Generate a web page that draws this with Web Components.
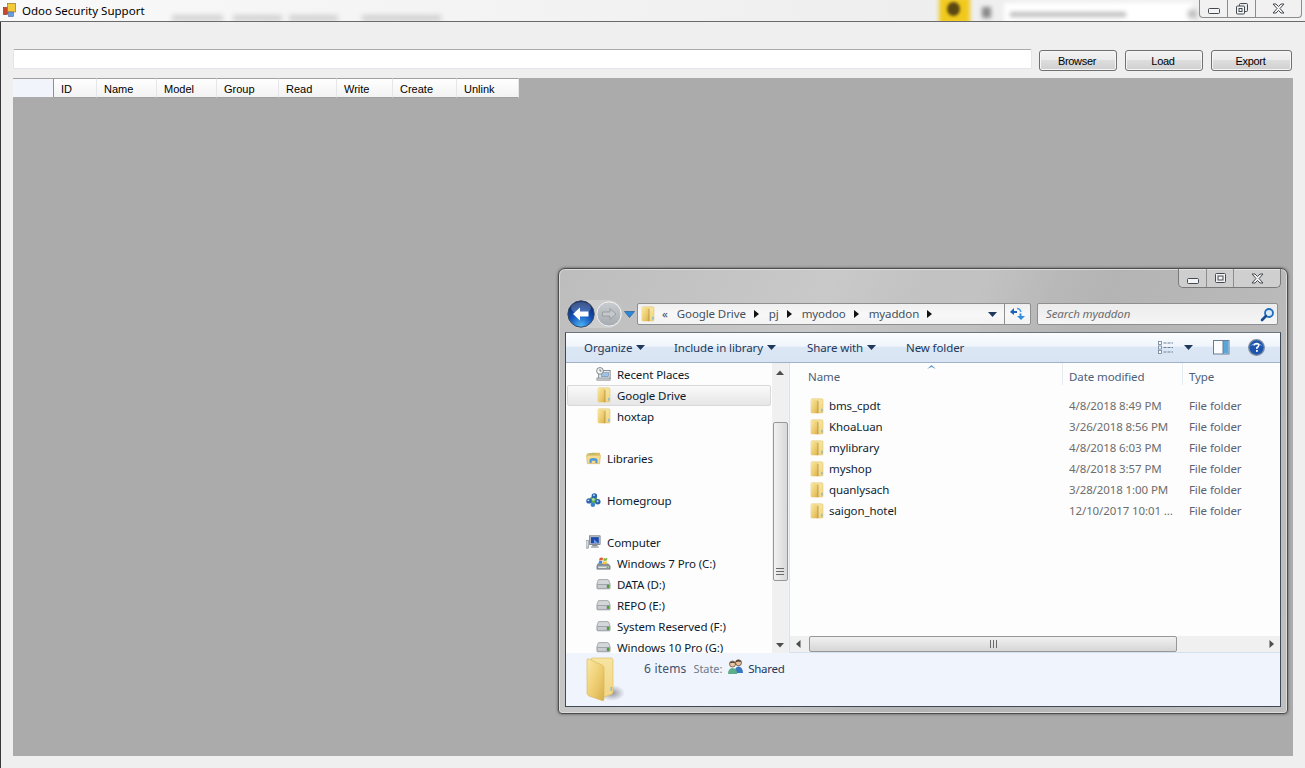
<!DOCTYPE html>
<html lang="en">
<head>
<meta charset="utf-8">
<title>Odoo Security Support</title>
<style>
  html, body { margin: 0; height: 768px; overflow: hidden; background: #f0f0f0; }
</style>
</head>
<body>
<odoo-app></odoo-app>

<script>
// Icons live in a map, each <ui-icon> copies its svg in its own shadow root
const FOLDER_DEFS = `
  <linearGradient id="a" x1="0" y1="0" x2="1" y2="1"><stop offset="0" stop-color="#fbe9a2"/><stop offset=".6" stop-color="#ecca6c"/><stop offset="1" stop-color="#d7ae4c"/></linearGradient>
  <linearGradient id="b" x1="0" y1="0" x2="0" y2="1"><stop offset="0" stop-color="#f6e4a0"/><stop offset="1" stop-color="#f1d683"/></linearGradient>`;

const ICONS = {
    app: `<svg width="16" height="16" viewBox="0 0 16 16"><rect x=".5" y="5.500" width="4" height="7" fill="#c8452a" stroke="#7a2a1a" stroke-width=".6"/><rect x="4.500" y="1.500" width="8" height="8.500" fill="#f3cb3a" stroke="#97752a" stroke-width=".7"/><rect x="5.500" y="10" width="5" height="4.500" fill="#6d9be0" stroke="#476aa0" stroke-width=".6"/></svg>`,
    folder: `<svg width="14" height="16" viewBox="0 0 14 16"><defs>${FOLDER_DEFS}</defs><path d="M1 2 Q1 .8 2.200 .8 H11.800 Q13 .8 13 2 V14 Q13 15 12 15 H2 Q1 15 1 14 Z" fill="url(#b)" stroke="#e0bd62" stroke-width=".5"/><path d="M1 2 Q1 1 2 1.200 L7.300 2.300 Q8 2.500 8 3.200 V15.200 L2 14.800 Q1 14.700 1 13.700 Z" fill="url(#a)"/><path d="M8 2.800V15" stroke="#a98a3e" stroke-width=".7"/><rect x="11.300" y="10.800" width="1.200" height="2.800" fill="#6fb4e8"/></svg>`,
    bigfolder: `<svg width="40" height="46" viewBox="0 0 40 46"><defs>${FOLDER_DEFS}<radialGradient id="s"><stop offset="0" stop-color="#7d7f86" stop-opacity=".85"/><stop offset="1" stop-color="#8d8f96" stop-opacity="0"/></radialGradient></defs><ellipse cx="26" cy="36" rx="13" ry="8" fill="url(#s)"/><path d="M5 2 Q5 1 6 1 H25 Q27 1 27 3 V35 Q27 37 25 37.500 L12 42 Z" fill="url(#b)" stroke="#dcbb62" stroke-width=".6"/><path d="M1 3 Q1 1 3 2 L16 8 Q18 9 18 11 V42 Q18 44.500 16 43.500 L3 39 Q1 38 1 36 Z" fill="url(#a)" stroke="#d8b357" stroke-width=".6"/><rect x="24.500" y="30" width="1.400" height="4" fill="#7fbbe8"/></svg>`,
    recent: `<svg width="17" height="16" viewBox="0 0 17 16"><rect x="3" y="4" width="13" height="9" fill="#e8ebee" stroke="#7b8289"/><rect x="6" y="6.500" width="8" height="4.500" fill="#9ec1e6" stroke="#5f7fa3" stroke-width=".6"/><rect x="1" y="12.500" width="15" height="2.500" fill="#c8ccd0" stroke="#7b8289" stroke-width=".7"/><circle cx="4.500" cy="4.500" r="3.800" fill="#f5f6f7" stroke="#6f767d"/><path d="M4.500 2.500V4.700H6.200" fill="none" stroke="#444" stroke-width=".8"/></svg>`,
    libraries: `<svg width="17" height="16" viewBox="0 0 17 16"><path d="M1 3 H6 L7 2 H15 Q16 2 16 3 V5 H1 Z" fill="#e2bd5e"/><rect x="3" y="2.600" width="8" height="1.400" fill="#9ac26b"/><path d="M.6 5 H16.400 L15.400 14.400 H1.600 Z" fill="#f5dc8f" stroke="#c9a44e" stroke-width=".6"/><path d="M4 13.800 V10.200 Q4 8 8.500 8 Q13 8 13 10.200 V13.800 H10.600 V11 H6.400 V13.800 Z" fill="#4e97d8"/></svg>`,
    homegroup: `<svg width="17" height="16" viewBox="0 0 17 16"><circle cx="8.500" cy="8" r="4.200" fill="#5cae4c"/><circle cx="9.500" cy="3.400" r="3.100" fill="#2a62b0"/><circle cx="3.400" cy="9" r="3.100" fill="#2a62b0"/><circle cx="13.400" cy="10" r="3.100" fill="#2a62b0"/><circle cx="7.800" cy="13.300" r="2.600" fill="#3c82cf"/><circle cx="9" cy="2.600" r="1.100" fill="#bcd8f5"/><circle cx="2.700" cy="8.400" r="1.100" fill="#bcd8f5"/><circle cx="13.100" cy="9.400" r="1.100" fill="#bcd8f5"/><circle cx="8.400" cy="7.400" r="1.600" fill="#b5e0a3"/></svg>`,
    computer: `<svg width="17" height="16" viewBox="0 0 17 16"><rect x="0" y="6" width="3" height="9" fill="#d7dade" stroke="#7d848b" stroke-width=".6"/><rect x="1" y="13" width="1" height="1" fill="#60c040"/><rect x="4" y="1" width="12" height="10" fill="#bcc3ca" stroke="#5a6068" stroke-width=".7"/><rect x="5.500" y="2.500" width="9" height="7" fill="#1d48ac"/><path d="M9 9.500 V5 L14 9.500 Z" fill="#6f97e0"/><rect x="7" y="11.500" width="6" height="1.600" fill="#7d848b"/><rect x="5.500" y="13" width="9" height="1.600" fill="#a7adb3"/></svg>`,
    windrive: `<svg width="17" height="16" viewBox="0 0 17 16"><path d="M2 9 H14 L16 11.500 V15 H1 V11.500 Z" fill="#8c949b" stroke="#5d646b" stroke-width=".6"/><rect x="2.500" y="12" width="12" height="1.800" fill="#dfe3e6"/><rect x="12" y="12.200" width="2" height="1.300" fill="#5da83e"/><path d="M4 2.500 Q6 1 8 2.200 L7.400 5.200 Q5.500 4.200 3.500 5.500 Z" fill="#e8582c"/><path d="M8.800 2.400 Q10.600 3.400 13 2 L12.400 5 Q10.200 6.200 8.200 5.300 Z" fill="#7fba3c"/><path d="M3.300 6.200 Q5.300 5 7.200 6 L6.600 9 Q4.800 8 2.800 9.200 Z" fill="#3f86d6"/><path d="M8 6.100 Q10 7 12.300 5.800 L11.800 8.800 Q9.600 10 7.400 9 Z" fill="#f4c32c"/></svg>`,
    drive: `<svg width="17" height="12" viewBox="0 0 17 12"><path d="M3 1 H13 Q14.500 1 15 3 L16 6 V10.500 Q16 11.500 15 11.500 H2 Q1 11.500 1 10.500 V6 L2 3 Q2.400 1 3 1 Z" fill="#d4d7d9" stroke="#7f858a" stroke-width=".7"/><rect x="1.400" y="6" width="14.200" height="5.200" fill="#9aa1a6"/><rect x="2" y="7" width="10" height="3.400" fill="#c9cdd0"/><rect x="12.500" y="7" width="2.400" height="3.400" fill="#4e9a32"/></svg>`,
    shared: `<svg width="17" height="16" viewBox="0 0 17 16"><circle cx="11.500" cy="3.800" r="3" fill="#e6bf9a" stroke="#4c3a2c" stroke-width=".7"/><path d="M8.400 3 Q11 -.8 14.600 3 Q11.500 2 8.400 3Z" fill="#3e3128"/><path d="M7.500 14 Q7.500 8 11.500 7.500 Q15.800 8 16 14 Z" fill="#3b78c4"/><circle cx="5.500" cy="5" r="3" fill="#ecc7a4" stroke="#4c3a2c" stroke-width=".7"/><path d="M2.400 4.400 Q5.400 .6 8.600 4.400 Q5.500 3.200 2.400 4.400Z" fill="#3e3128"/><path d="M1 15 Q1 9.400 5.500 9 Q10 9.400 10.200 15 Z" fill="#5cae8a"/></svg>`,
    back: `<svg width="28" height="28" viewBox="0 0 28 28"><defs><radialGradient id="g" cx=".5" cy=".95" r=".85"><stop offset="0" stop-color="#49b4f4"/><stop offset=".55" stop-color="#1552b8"/><stop offset="1" stop-color="#0a2a70"/></radialGradient></defs><circle cx="14" cy="14" r="13.200" fill="url(#g)" stroke="#3c4a5e"/><ellipse cx="14" cy="8" rx="10" ry="6" fill="#fff" opacity=".22"/><path d="M6 14 L13 7.500 V11.500 H21.500 V16.500 H13 V20.500 Z" fill="#fff"/></svg>`,
    forward: `<svg width="26" height="26" viewBox="0 0 26 26"><defs><linearGradient id="g" x1="0" y1="0" x2="0" y2="1"><stop offset="0" stop-color="#c9cdd1"/><stop offset="1" stop-color="#a6abb1"/></linearGradient></defs><circle cx="13" cy="13" r="12.200" fill="url(#g)" stroke="#f2f3f4"/><path d="M20 13 L14 7.600 V11 H6.500 V15 H14 V18.400 Z" fill="#c5c8cc" stroke="#8f9499" stroke-width=".8"/></svg>`,
    refresh: `<svg width="17" height="14" viewBox="0 0 17 14"><path d="M5 1 L1 5 L5 8 V6 H8 V4 H5 Z" fill="#1c60b8"/><path d="M12 13 L8 9 H10.500 V6.500 H12.500 V9 H16 Z" fill="#2f8fdd"/><path d="M8 1.500 Q11 1.500 12 5" fill="none" stroke="#4b9be0" stroke-width="1.400"/></svg>`,
    search: `<svg width="15" height="15" viewBox="0 0 15 15"><circle cx="9" cy="6" r="4" fill="#dceaf8" stroke="#1f6fc0" stroke-width="1.800"/><path d="M6 9 L2 13" stroke="#134e92" stroke-width="2.600" stroke-linecap="round"/></svg>`,
    views: `<svg width="16" height="14" viewBox="0 0 16 14"><g fill="#fff" stroke="#6a7f9b" stroke-width=".8"><rect x=".5" y=".5" width="3" height="3"/><rect x=".5" y="5" width="3" height="3"/><rect x=".5" y="9.500" width="3" height="3"/></g><path d="M5.500 2H15M5.500 6.500H15M5.500 11H15" stroke="#6a7f9b" stroke-dasharray="3 1"/></svg>`,
    pane: `<svg width="17" height="15" viewBox="0 0 17 15"><rect x=".5" y=".5" width="15.500" height="13.500" fill="#fbfcfd" stroke="#6a7c93"/><rect x="10" y="1" width="5.500" height="12.500" fill="#5aa6da"/><path d="M10 .5V14" stroke="#6a7c93"/></svg>`,
    help: `<svg width="17" height="17" viewBox="0 0 17 17"><circle cx="8.500" cy="8.500" r="7.800" fill="#1d55ae" stroke="#7f8ea3" stroke-width="1.300"/><path d="M2 7 Q8.500 1 15 7 Q8.500 4.500 2 7Z" fill="#8db4e8"/><path d="M6.200 6.500 Q6.500 4.500 8.700 4.500 Q11 4.700 10.800 6.500 Q10.500 7.800 8.900 8.500 V10" fill="none" stroke="#fff" stroke-width="1.500"/><rect x="8" y="11" width="1.800" height="1.800" fill="#fff"/></svg>`,
    min: `<svg width="12" height="6" viewBox="0 0 12 6"><rect x=".5" y=".5" width="11" height="5" rx="1" fill="#f3f4f5" stroke="#454a50"/></svg>`,
    restore: `<svg width="12" height="12" viewBox="0 0 12 12"><rect x="3.500" y=".5" width="8" height="8" rx="1" fill="#e9eaeb" stroke="#454a50"/><rect x=".5" y="3" width="8" height="8" rx="1" fill="#f3f4f5" stroke="#454a50"/><rect x="3" y="5.500" width="3" height="3" fill="none" stroke="#454a50"/></svg>`,
    max: `<svg width="11" height="10" viewBox="0 0 11 10"><rect x=".5" y=".5" width="10" height="9" rx="1" fill="#f3f4f5" stroke="#454a50"/><rect x="3" y="3" width="5" height="4" fill="none" stroke="#454a50"/></svg>`,
    close: `<svg width="13" height="11" viewBox="0 0 13 11"><path d="M1 1H4L6.500 3.500L9 1H12L8 5.500L12 10H9L6.500 7.500L4 10H1L5 5.500Z" fill="#f3f4f5" stroke="#454a50" stroke-linejoin="round"/></svg>`,
    left: `<svg width="5" height="8" viewBox="0 0 5 8"><path d="M4.500 0V8L0 4Z" fill="#4d4d4d"/></svg>`,
    right: `<svg width="5" height="8" viewBox="0 0 5 8"><path d="M.5 0V8L5 4Z" fill="#4d4d4d"/></svg>`,
    up: `<svg width="8" height="5" viewBox="0 0 8 5"><path d="M0 5H8L4 .5Z" fill="#4d4d4d"/></svg>`,
    down: `<svg width="8" height="5" viewBox="0 0 8 5"><path d="M0 0H8L4 4.500Z" fill="#4d4d4d"/></svg>`,
    caret: `<svg width="9" height="5" viewBox="0 0 9 5"><path d="M0 0H9L4.500 5Z" fill="#1e395b"/></svg>`,
    bluecaret: `<svg width="11" height="7" viewBox="0 0 11 7"><path d="M.5 .5H10.500L5.500 6.500Z" fill="#2a86d8" stroke="#2b5f96" stroke-width=".7"/></svg>`,
    crumb: `<svg width="5" height="8" viewBox="0 0 5 8"><path d="M0 0V8L5 4Z" fill="#111"/></svg>`,
    grip: `<svg width="8" height="7" viewBox="0 0 8 7"><path d="M0 .5H8M0 3.500H8M0 6.500H8" stroke="#6a6a6a"/></svg>`,
    gripv: `<svg width="7" height="8" viewBox="0 0 7 8"><path d="M.5 0V8M3.500 0V8M6.500 0V8" stroke="#6a6a6a"/></svg>`,
    sort: `<svg width="9" height="4" viewBox="0 0 9 4"><path d="M0 4 L4.500 0 L9 4 L4.500 2Z" fill="#6b9bc8"/></svg>`
};

class UiIcon extends HTMLElement {
    connectedCallback() {
        this.attachShadow({ mode: 'open' });
        this.shadowRoot.innerHTML = `<style>:host{display:inline-flex;flex:none;line-height:0}</style>${ICONS[this.getAttribute('name')] || ''}`;
    }
}
customElements.define('ui-icon', UiIcon);

// Classic WinForms button
class WinButton extends HTMLElement {
    connectedCallback() {
        this.attachShadow({ mode: 'open' });
        this.shadowRoot.innerHTML = `
            <style>
                :host {
                    display: flex; align-items: center; justify-content: center;
                    box-sizing: border-box; height: 21px; width: var(--w, 78px);
                    border: 1px solid #707070; border-radius: 3px;
                    box-shadow: inset 0 0 0 1px #f6f6f6;
                    background: linear-gradient(#f2f2f2 0, #ebebeb 48%, #dddddd 50%, #cfcfcf 100%);
                    font: 11px "Liberation Sans", sans-serif; letter-spacing: -.3px; color: #000; padding: 1px 2px 0 0;
                }
            </style>
            <slot></slot>`;
    }
}
customElements.define('win-button', WinButton);

// Top title bar of the WinForms app, behind it the blurred aero glass
class AppTitlebar extends HTMLElement {
    connectedCallback() {
        this.attachShadow({ mode: 'open' });
        this.shadowRoot.innerHTML = `
            <style>
                :host {
                    display: flex; align-items: center; position: relative; overflow: hidden;
                    box-sizing: border-box; height: 22px; padding: 0 0 1px 3px; gap: 3px;
                    background: linear-gradient(90deg, #f9f9f9, #f3f3f3 40%, #eeeeee 70%, #f3f3f3);
                    border-bottom: 1px solid #6a6a6a;
                    font: 11.5px "Noto Sans", sans-serif; color: #000;
                }
                .title { position: relative; }
                .blur { position: absolute; filter: blur(2.500px); }
                .word { top: 15px; height: 6px; background: #7f7f7f; opacity: .3; }
                .sun { left: 939px; top: -3px; width: 31px; height: 27px; background: #f1c91c; filter: blur(2px); }
                .spot { left: 947px; top: 2px; width: 13px; height: 14px; border-radius: 50%; background: #5a4712; filter: blur(1.500px); }
                .mark { left: 982px; top: 7px; width: 9px; height: 11px; background: #5f5f5f; opacity: .7; filter: blur(2px); }
                .box { left: 1004px; top: 3px; width: 188px; height: 20px; background: #fff; filter: blur(2px); }
                .boxtext { left: 1010px; top: 12px; width: 116px; height: 5px; background: #a8a8a8; opacity: .75; filter: blur(2px); }
                .mark2 { left: 1188px; top: 10px; width: 9px; height: 8px; background: #bdbdbd; }
                .caps {
                    position: absolute; left: 1199px; top: 0; display: flex; box-sizing: border-box;
                    width: 103px; height: 18px; border: 1px solid #8c8c8c; border-top: 0;
                    border-radius: 0 0 4px 4px; background: rgba(240,240,240,.65);
                }
                .caps span { display: flex; align-items: center; justify-content: center; border-right: 1px solid #8c8c8c; }
                .caps span:nth-child(1) { width: 28px; padding-top: 4px; box-sizing: border-box; }
                .caps span:nth-child(2) { width: 27px; }
                .caps span:nth-child(3) { flex: 1; border: 0; }
            </style>
            <ui-icon name="app"></ui-icon>
            <div class="blur word" style="left:172px;width:51px"></div>
            <div class="blur word" style="left:233px;width:49px"></div>
            <div class="blur word" style="left:289px;width:49px"></div>
            <div class="blur word" style="left:362px;width:79px"></div>
            <div class="blur sun"></div><div class="blur spot"></div>
            <div class="blur mark"></div>
            <div class="blur box"></div>
            <div class="blur boxtext"></div>
            <div class="blur mark2"></div>
            <span class="title"><slot></slot></span>
            <div class="caps">
                <span><ui-icon name="min"></ui-icon></span>
                <span><ui-icon name="restore"></ui-icon></span>
                <span><ui-icon name="close"></ui-icon></span>
            </div>`;
    }
}
customElements.define('app-titlebar', AppTitlebar);

// Path field plus the three buttons
class PathBar extends HTMLElement {
    connectedCallback() {
        this.attachShadow({ mode: 'open' });
        this.shadowRoot.innerHTML = `
            <style>
                :host { display: flex; align-items: flex-start; gap: 8px; padding: 0 13px 0 13px; height: 29px; box-sizing: border-box; }
                .field {
                    box-sizing: border-box; width: 1019px; height: 20px; margin-right: -1px; background: #fff;
                    border: 1px solid #e2e6ec; border-top-color: #ababab; border-radius: 2px;
                }
                slot { display: flex; gap: 8px; padding-top: 1px; }
            </style>
            <div class="field"></div>
            <slot></slot>`;
    }
}
customElements.define('path-bar', PathBar);

class GridHead extends HTMLElement {
    connectedCallback() {
        const cols = JSON.parse(this.getAttribute('cols'));
        this.attachShadow({ mode: 'open' });
        this.shadowRoot.innerHTML = `
            <style>
                :host { display: flex; width: 506px; height: 20px; font: 11px "Liberation Sans", sans-serif; color: #000; }
                .corner { box-sizing: border-box; width: 41px; height: 19px; background: #f1f4fa; border-top: 1px solid #a0a0a0; border-right: 1px solid #8f8f8f; }
                .cell {
                    box-sizing: border-box; display: flex; align-items: center; padding: 2px 0 0 7px;
                    background: linear-gradient(#ffffff, #f8f8f8 55%, #f2f2f2);
                    border-top: 1px solid #a0a0a0; border-bottom: 1px solid #a0a0a0; border-right: 1px solid #e4e6ea;
                }
            </style>
            <div class="corner"></div>
            ${cols.map(([name, w]) => `<div class="cell" style="width:${w}px">${name}</div>`).join('')}`;
    }
}
customElements.define('grid-head', GridHead);

// Left tree row
class NavItem extends HTMLElement {
    connectedCallback() {
        const top = this.hasAttribute('top');
        this.attachShadow({ mode: 'open' });
        this.shadowRoot.innerHTML = `
            <style>
                :host {
                    display: flex; align-items: center; box-sizing: border-box; height: 21px; gap: 6px;
                    margin: 0 0 0 1px; width: 204px; border: 1px solid transparent; border-radius: 2px;
                    padding-left: ${top ? 18 : 28}px; color: #0c1a2c;
                }
                :host([selected]) { border-color: #d9d9d9; background: linear-gradient(#fafafa, #e6e6e6); }
                ui-icon { width: 15px; justify-content: center; margin-top: -1px; overflow: visible; }
                :host([gap]) { margin-top: 21px; }
            </style>
            <ui-icon name="${this.getAttribute('icon')}"></ui-icon>
            <slot></slot>`;
    }
}
customElements.define('nav-item', NavItem);

class FileRow extends HTMLElement {
    connectedCallback() {
        this.attachShadow({ mode: 'open' });
        this.shadowRoot.innerHTML = `
            <style>
                :host { display: flex; align-items: center; height: 21px; color: #6d6d6d; }
                .name { display: flex; align-items: center; gap: 5px; box-sizing: border-box; width: 279px; padding-left: 20px; color: #111d2e; }
                .date { box-sizing: border-box; width: 120px; }
                .type { color: #5e6170; }
            </style>
            <div class="name"><ui-icon name="folder"></ui-icon>${this.getAttribute('name')}</div>
            <div class="date">${this.getAttribute('date')}</div>
            <div class="type">File folder</div>`;
    }
}
customElements.define('file-row', FileRow);

// Windows 7 Explorer window floating over the grey grid
class ExplorerWindow extends HTMLElement {
    connectedCallback() {
        this.attachShadow({ mode: 'open' });
        const crumb = '<ui-icon name="crumb"></ui-icon>';
        this.shadowRoot.innerHTML = `
            <style>
                :host {
                    position: absolute; left: 558px; top: 268px; z-index: 2;
                    box-sizing: border-box; width: 730px; height: 446px; display: flex; flex-direction: column;
                    padding: 0 6px 6px 6px; border-radius: 7px 7px 4px 4px; border: 1px solid #4d4d4d;
                    box-shadow: 0 0 3px rgba(0,0,0,.55), inset 0 0 0 1px #dcdcdc;
                    background:
                        linear-gradient(115deg, rgba(255,255,255,0) 40%, rgba(255,255,255,.07) 46%, rgba(255,255,255,0) 54%),
                        linear-gradient(115deg, #bdbdbd, #c9c9c9 30%, #b4b4b4 60%, #c0c0c0);
                    font: 11.5px "Noto Sans", sans-serif; letter-spacing: -.1px;
                }
                .caps { display: flex; justify-content: flex-end; height: 19px; flex: none; }
                .caps div { display: flex; box-sizing: border-box; width: 103px; border: 1px solid #7a7a7a; border-top: 0; border-radius: 0 0 5px 5px; background: rgba(235,235,235,.45); }
                .caps span { display: flex; align-items: center; justify-content: center; border-right: 1px solid #8e8e8e; }
                .caps span:nth-child(1) { width: 28px; padding-top: 5px; box-sizing: border-box; }
                .caps span:nth-child(2) { width: 26px; }
                .caps span:nth-child(3) { flex: 1; border: 0; }

                .toolbar { display: flex; height: 30px; flex: none; margin: 11px 0 0 2px; align-items: center; }
                .nav { display: flex; align-items: center; width: 70px; flex: none; }
                .pill { display: flex; align-items: center; gap: 1px; border-radius: 14px; background: rgba(255,255,255,.22); }
                .nav > ui-icon { margin-left: 2px; }
                .addr {
                    box-sizing: border-box; height: 22px; width: 394px; display: flex; align-items: center;
                    border: 1px solid #8e8f8f; border-radius: 2px; background: linear-gradient(#efefef, #f8f8f8 50%, #f3f3f3);
                    color: #44505d; padding-left: 3px; flex: none;
                }
                .addr .crumbs { display: flex; align-items: center; flex: 1; }
                .addr .t { margin: 0 8px 2px 0; }
                .addr ui-icon[name=crumb] { margin-right: 10px; }
                .addr .drop { width: 24px; display: flex; justify-content: center; }
                .addr .ref { display: flex; align-items: center; justify-content: center; width: 25px; height: 20px; border-left: 1px solid #8e8f8f; }
                .search {
                    box-sizing: border-box; height: 22px; width: 241px; margin-left: 6px; display: flex; align-items: center; justify-content: space-between;
                    border: 1px solid #8e8f8f; border-radius: 2px; background: linear-gradient(#ececec, #f5f5f5);
                    color: #6d6d6d; font-style: italic; padding: 0 2px 0 8px;
                }
                .search span { margin-bottom: 2px; }

                .client {
                    flex: 1; min-height: 0; margin-top: 3px; border: 1px solid #3f4a56; border-top-color: #6b7480; display: flex; flex-direction: column;
                    background: #fdfdfd;
                }
                .cmd {
                    flex: none; display: flex; align-items: center; height: 30px; box-sizing: border-box; padding-left: 18px;
                    background: linear-gradient(#fbfdff 0, #eff5fb 45%, #dce7f5 50%, #d8e4f3 100%);
                    border-bottom: 1px solid #a0b2c8; color: #1e395b;
                }
                .cmd .i { display: flex; align-items: center; gap: 4px; }
                .cmd .i:nth-child(1) { width: 90px; }
                .cmd .i:nth-child(2) { width: 133px; }
                .cmd .i:nth-child(3) { width: 99px; }
                .cmd .tools { margin-left: auto; display: flex; align-items: center; padding-right: 15px; }

                .mid { flex: 1; min-height: 0; display: flex; }
                .tree { box-sizing: border-box; width: 206px; height: 100%; overflow: hidden; flex: none; padding-top: 1px; }
                .vbar {
                    box-sizing: border-box; width: 16px; flex: none; background: #f0f0f0; display: flex; flex-direction: column; align-items: center;
                    padding-top: 7px;
                }
                .vthumb {
                    box-sizing: border-box; width: 15px; height: 159px; margin-top: 47px; display: flex; align-items: center; justify-content: center;
                    border: 1px solid #979797; border-radius: 2px; background: linear-gradient(90deg, #f1f1f1, #d8d8d8);
                }
                .vbar ui-icon:last-child { margin-top: auto; margin-bottom: 5px; }
                .split { width: 2px; flex: none; background: #eef3f9; border-right: 1px solid #d6e2ef; box-sizing: border-box; }

                .list { flex: 1; min-width: 0; display: flex; flex-direction: column; position: relative; }
                .head { display: flex; height: 32px; flex: none; color: #4c607a; align-items: flex-start; }
                .head div { box-sizing: border-box; height: 22px; padding-top: 6px; line-height: 16px; }
                .head div:nth-child(1) { width: 273px; padding-left: 18px; border-right: 1px solid #e6ecf2; }
                .head div:nth-child(2) { width: 120px; padding-left: 6px; border-right: 1px solid #e6ecf2; }
                .head div:nth-child(3) { padding-left: 6px; }
                .sort { position: absolute; left: 137px; top: 2px; }
                .rows { flex: 1; }
                .hbar {
                    flex: none; height: 17px; box-sizing: border-box; display: flex; align-items: center; background: #f0f0f0;
                    border-bottom: 1px solid #d5e0ee;
                }
                .hbar > ui-icon:first-child { margin-left: 6px; }
                .hthumb {
                    box-sizing: border-box; width: 368px; height: 16px; margin-left: 8px; display: flex; align-items: center; justify-content: center;
                    border: 1px solid #979797; border-radius: 2px; background: linear-gradient(#f1f1f1, #d6d6d6);
                }
                .hbar > ui-icon:last-child { margin-left: auto; margin-right: 6px; }

                .status {
                    flex: none; height: 53px; box-sizing: border-box; background: #f0f4fc; display: flex;
                    padding: 6px 0 0 20px; color: #1e395b;
                }
                .status .big { margin-top: -2px; }
                .status .txt { display: flex; align-items: center; height: 19px; margin-left: 18px; }
                .status .n { color: #3f5270; font-size: 12px; letter-spacing: .2px; }
                .status .st { color: #6d7b8d; font-size: 11px; margin: 0 5px 0 7px; }
                .status .sh { letter-spacing: -.3px; }
                .status ui-icon[name=shared] { margin-right: 4px; margin-top: -3px; }
            </style>
            <div class="caps"><div>
                <span><ui-icon name="min"></ui-icon></span>
                <span><ui-icon name="max"></ui-icon></span>
                <span><ui-icon name="close"></ui-icon></span>
            </div></div>
            <div class="toolbar">
                <div class="nav">
                    <div class="pill"><ui-icon name="back"></ui-icon><ui-icon name="forward"></ui-icon></div>
                    <ui-icon name="bluecaret"></ui-icon>
                </div>
                <div class="addr">
                    <div class="crumbs">
                        <ui-icon name="folder"></ui-icon>
                        <span class="t" style="margin-left:7px;margin-right:9px">&laquo;</span>
                        <span class="t">Google Drive</span>${crumb}
                        <span class="t">pj</span>${crumb}
                        <span class="t">myodoo</span>${crumb}
                        <span class="t">myaddon</span>${crumb}
                    </div>
                    <div class="drop"><ui-icon name="caret"></ui-icon></div>
                    <div class="ref"><ui-icon name="refresh"></ui-icon></div>
                </div>
                <div class="search"><span>Search myaddon</span><ui-icon name="search"></ui-icon></div>
            </div>
            <div class="client">
                <div class="cmd">
                    <div class="i">Organize <ui-icon name="caret"></ui-icon></div>
                    <div class="i">Include in library <ui-icon name="caret"></ui-icon></div>
                    <div class="i">Share with <ui-icon name="caret"></ui-icon></div>
                    <div class="i">New folder</div>
                    <div class="tools">
                        <ui-icon name="views"></ui-icon>
                        <ui-icon name="caret" style="margin:0 20px 0 10px"></ui-icon>
                        <ui-icon name="pane" style="margin-right:18px"></ui-icon>
                        <ui-icon name="help"></ui-icon>
                    </div>
                </div>
                <div class="mid">
                    <div class="tree"><slot name="tree"></slot></div>
                    <div class="vbar">
                        <ui-icon name="up"></ui-icon>
                        <div class="vthumb"><ui-icon name="grip"></ui-icon></div>
                        <ui-icon name="down"></ui-icon>
                    </div>
                    <div class="split"></div>
                    <div class="list">
                        <div class="head"><div>Name</div><div>Date modified</div><div>Type</div></div>
                        <ui-icon class="sort" name="sort"></ui-icon>
                        <div class="rows"><slot name="files"></slot></div>
                        <div class="hbar">
                            <ui-icon name="left"></ui-icon>
                            <div class="hthumb"><ui-icon name="gripv"></ui-icon></div>
                            <ui-icon name="right"></ui-icon>
                        </div>
                    </div>
                </div>
                <div class="status">
                    <ui-icon class="big" name="bigfolder"></ui-icon>
                    <div class="txt">
                        <span class="n">6 items</span><span class="st">State:</span>
                        <ui-icon name="shared"></ui-icon><span class="sh">Shared</span>
                    </div>
                </div>
            </div>`;
    }
}
customElements.define('explorer-window', ExplorerWindow);

class OdooApp extends HTMLElement {
    connectedCallback() {
        const cols = [['ID', 43], ['Name', 60], ['Model', 60], ['Group', 62], ['Read', 58], ['Write', 56], ['Create', 64], ['Unlink', 62]];
        const tree = [
            ['recent', 'Recent Places', ''],
            ['folder', 'Google Drive', 'selected'],
            ['folder', 'hoxtap', ''],
            ['libraries', 'Libraries', 'top gap'],
            ['homegroup', 'Homegroup', 'top gap'],
            ['computer', 'Computer', 'top gap'],
            ['windrive', 'Windows 7 Pro (C:)', ''],
            ['drive', 'DATA (D:)', ''],
            ['drive', 'REPO (E:)', ''],
            ['drive', 'System Reserved (F:)', ''],
            ['drive', 'Windows 10 Pro (G:)', '']
        ];
        const files = [
            ['bms_cpdt', '4/8/2018 8:49 PM'],
            ['KhoaLuan', '3/26/2018 8:56 PM'],
            ['mylibrary', '4/8/2018 6:03 PM'],
            ['myshop', '4/8/2018 3:57 PM'],
            ['quanlysach', '3/28/2018 1:00 PM'],
            ['saigon_hotel', '12/10/2017 10:01 ...']
        ];
        this.attachShadow({ mode: 'open' });
        this.shadowRoot.innerHTML = `
            <style>
                :host {
                    display: flex; flex-direction: column; box-sizing: border-box; width: 1305px; height: 768px;
                    background: #efefef; position: relative;
                }
                .body { flex: 1; min-height: 0; display: flex; flex-direction: column; padding-top: 27px; border-left: 1px solid #3a3a3a; }
                path-bar { margin-left: -1px; }
                .grid { box-sizing: border-box; width: 1280px; height: 678px; margin-left: 12px; background: #ababab; }
            </style>
            <app-titlebar>Odoo Security Support</app-titlebar>
            <div class="body">
                <path-bar>
                    <win-button>Browser</win-button>
                    <win-button>Load</win-button>
                    <win-button style="--w:81px">Export</win-button>
                </path-bar>
                <div class="grid"><grid-head cols='${JSON.stringify(cols)}'></grid-head></div>
            </div>
            <explorer-window>
                ${tree.map(([i, t, a]) => `<nav-item slot="tree" icon="${i}" ${a}>${t}</nav-item>`).join('')}
                ${files.map(([n, d]) => `<file-row slot="files" name="${n}" date="${d}"></file-row>`).join('')}
            </explorer-window>`;
    }
}
customElements.define('odoo-app', OdooApp);
</script>
</body>
</html>
